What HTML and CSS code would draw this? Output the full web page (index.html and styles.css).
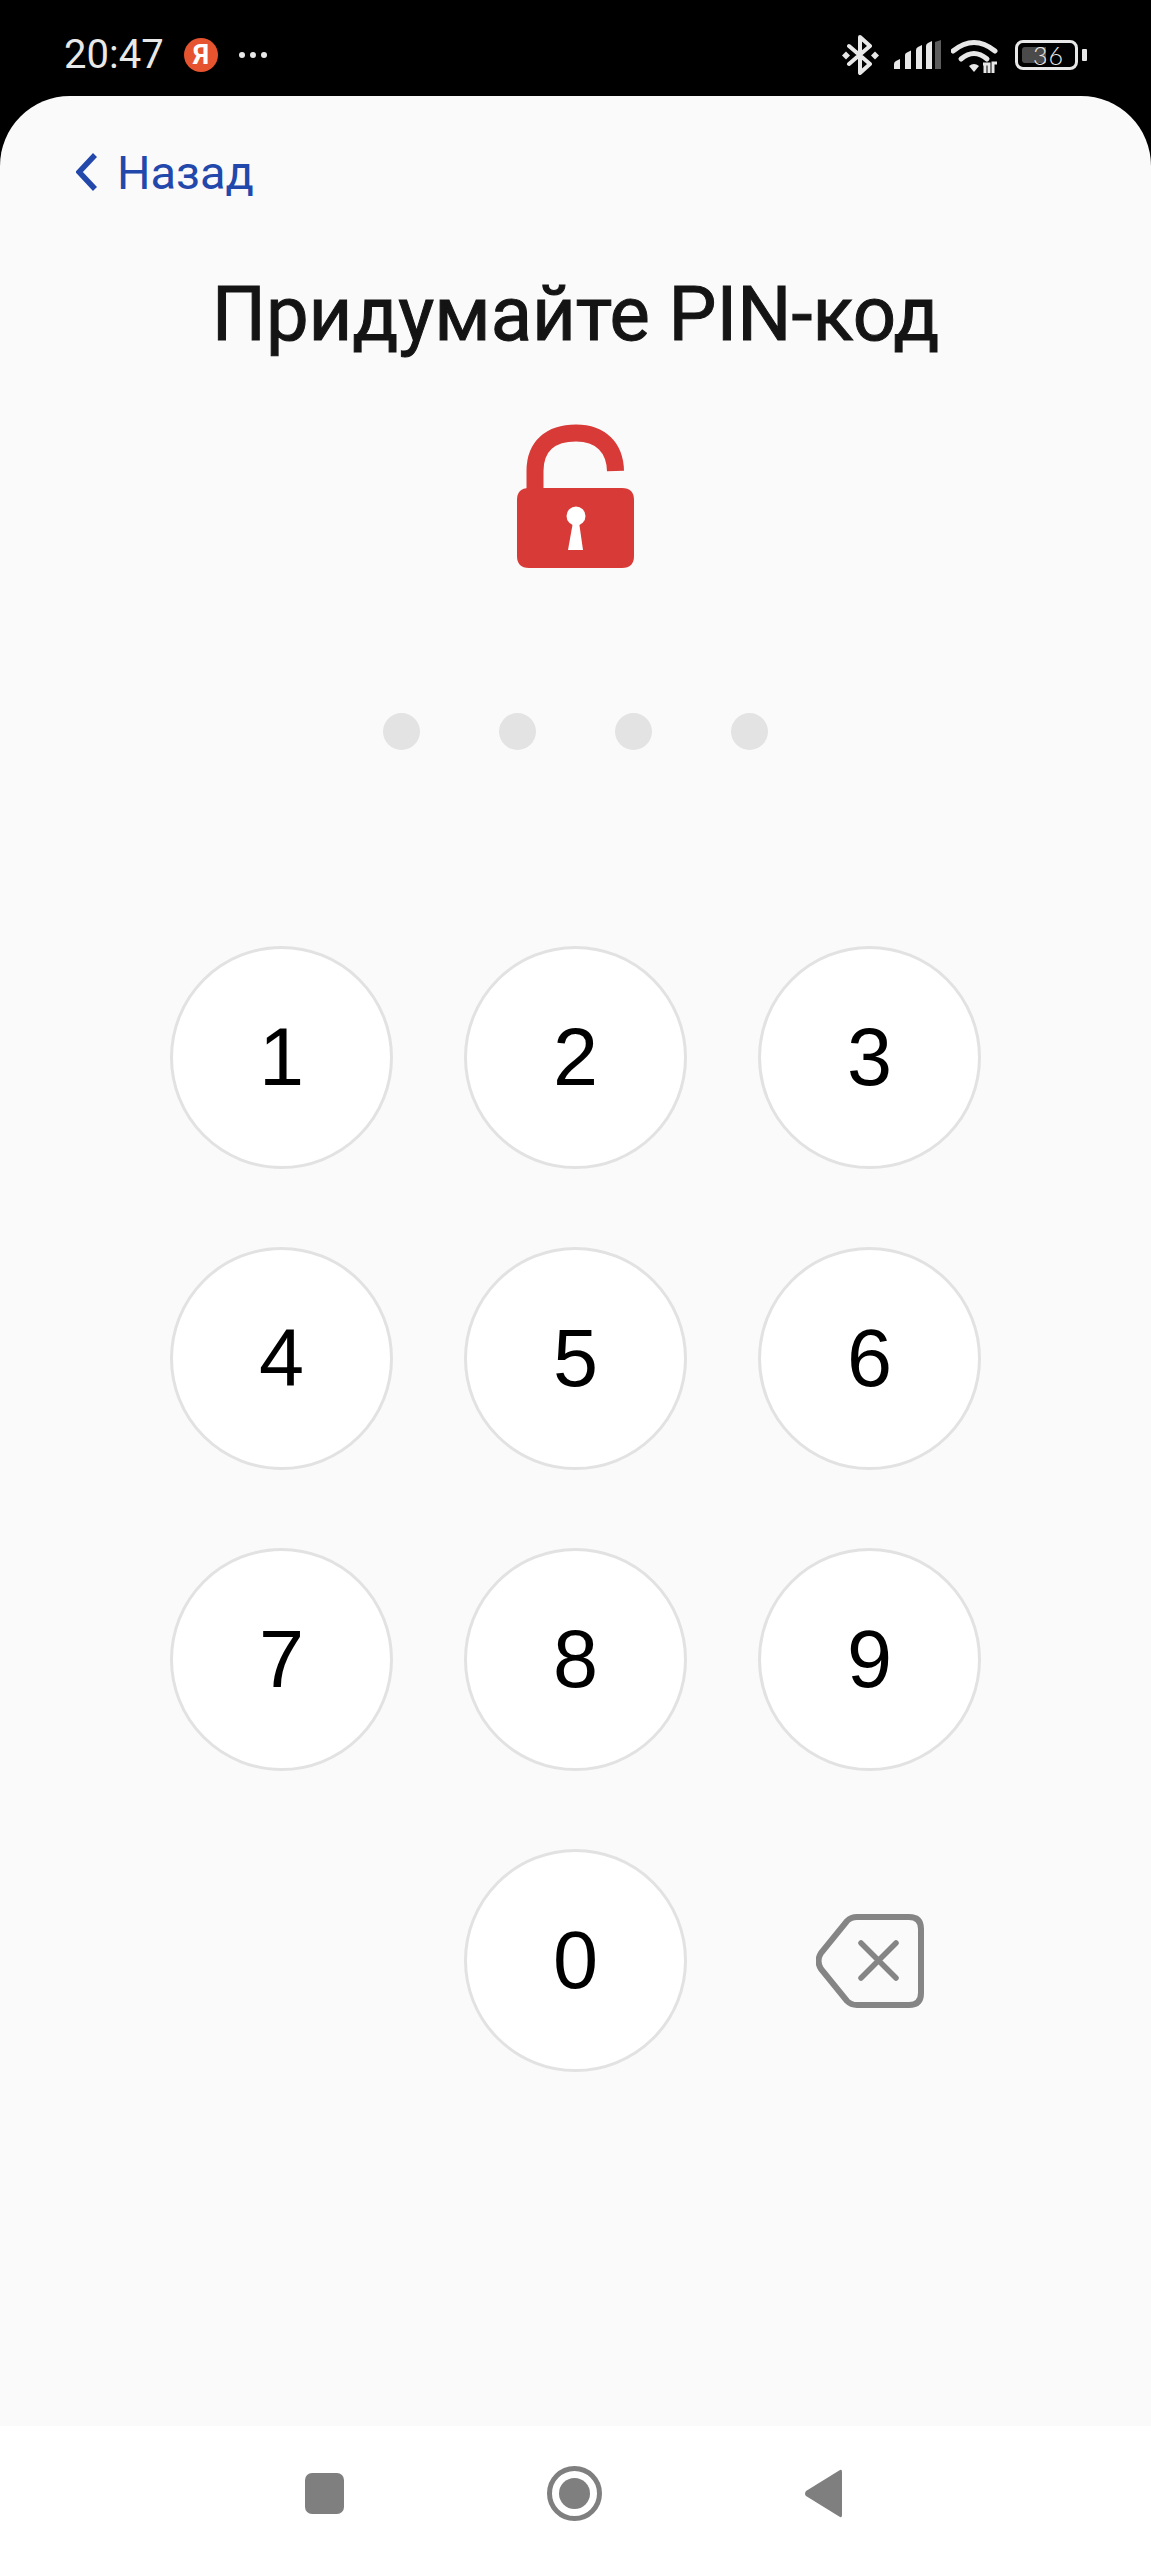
FILE: index.html
```html
<!DOCTYPE html>
<html lang="ru">
<head>
    <meta charset="UTF-8">
    <meta name="viewport" content="width=device-width, initial-scale=1.0">
    <title>Придумайте PIN-код</title>
    <link rel="stylesheet" href="styles.css">
</head>
<body>
    <div class="status-bar">
        <div class="status-left">
            <span class="time">20:47</span>
            <span class="ya-badge">Я</span>
            <span class="more-dots"><i></i><i></i><i></i></span>
        </div>
        <div class="status-right">
            <svg class="ic-bt" width="37" height="40" viewBox="0 0 37 40">
                <path d="M7 11L28 29L18 38V2L28 11L7 29" fill="none" stroke="#e8e8e8" stroke-width="4" stroke-linejoin="round" stroke-linecap="round"/>
                <path d="M4 16.500L8 20.500L4 24.500L0 20.500Z M33 16.500L37 20.500L33 24.500L29 20.500Z" fill="#e8e8e8"/>
            </svg>
            <svg class="ic-signal" width="47" height="30" viewBox="0 0 47 30">
                <path d="M0 29V24Q0 22 2 21L6 19V29Z" fill="#e8e8e8"/>
                <path d="M11 29V15Q11 13 13 12.500L17 10.500V29Z" fill="#e8e8e8"/>
                <path d="M22 29V10Q22 8 24 7L28 5V29Z" fill="#e8e8e8"/>
                <path d="M32 29V6Q32 4 34 3L38 1V29Z" fill="#e8e8e8"/>
                <path d="M41 29V2L47 0V29Z" fill="#5c5c5c"/>
            </svg>
            <svg class="ic-wifi" width="48" height="36" viewBox="0 0 48 36">
                <path d="M2 13Q23 -4 44 13" fill="none" stroke="#e8e8e8" stroke-width="5" stroke-linecap="round"/>
                <path d="M10 21Q23 10 36 21" fill="none" stroke="#e8e8e8" stroke-width="5" stroke-linecap="round"/>
                <path d="M18 28Q23 24 28 28L23 34Z" fill="#e8e8e8"/>
                <path d="M34 35V26M32 26H38V35M42 35V25H46" fill="none" stroke="#e8e8e8" stroke-width="3"/>
            </svg>
            <div class="battery">
                <div class="battery-body">
                    <div class="battery-fill"></div>
                    <span class="battery-num">36</span>
                </div>
                <div class="battery-tip"></div>
            </div>
        </div>
    </div>

    <div class="card">
        <a class="back-link">
            <svg width="21" height="38" viewBox="0 0 21 38">
                <path d="M19 2L3 19L19 36" fill="none" stroke="#2348ac" stroke-width="5.500"/>
            </svg>
            <span>Назад</span>
        </a>

        <h1>Придумайте PIN-код</h1>

        <svg class="lock" width="118" height="144" viewBox="0 0 118 144">
            <path d="M18 70V47C18 22 34 9 59 9C84 9 98 24 98.500 47" fill="none" stroke="#d83a37" stroke-width="17"/>
            <path d="M12 64H105Q117 64 117 76V132Q117 144 105 144H12Q0 144 0 132V76Q0 64 12 64Z" fill="#d83a37"/>
            <circle cx="59" cy="92" r="9.500" fill="#fff"/>
            <path d="M56 98H62L66 126H51Z" fill="#fff"/>
        </svg>

        <div class="pin-dots">
            <span></span><span></span><span></span><span></span>
        </div>

        <div class="keypad">
            <button class="key">1</button>
            <button class="key">2</button>
            <button class="key">3</button>
            <button class="key">4</button>
            <button class="key">5</button>
            <button class="key">6</button>
            <button class="key">7</button>
            <button class="key">8</button>
            <button class="key">9</button>
            <div></div>
            <button class="key">0</button>
            <button class="key-erase">
                <svg width="108" height="94" viewBox="0 0 108 94">
                    <path d="M41 3H93Q105 3 105 15V79Q105 91 93 91H41Q35 91 31 87L5 55Q0 47 5 39L31 7Q35 3 41 3Z" fill="none" stroke="#858585" stroke-width="6"/>
                    <path d="M45 29L80 64M80 29L45 64" fill="none" stroke="#858585" stroke-width="5.500" stroke-linecap="round"/>
                </svg>
            </button>
        </div>
    </div>

    <div class="nav-bar">
        <div class="nav-square"></div>
        <div class="nav-home"><div></div></div>
        <svg width="38" height="49" viewBox="0 0 38 49">
            <path d="M36 1Q38 0 38 3V46Q38 49 36 48L2 27Q0 25 2 22Z" fill="#7f7f7f"/>
        </svg>
    </div>
</body>
</html>
```

FILE: styles.css
```css
* {
    box-sizing: border-box;
}
body {
    margin: 0;
    height: 2560px;
    display: flex;
    flex-direction: column;
    background-color: #000;
    font-family: Roboto, "Noto Sans", sans-serif;
}

/* status bar */
.status-bar {
    height: 96px;
    flex: none;
    display: flex;
    justify-content: space-between;
    padding: 35px 64px 0 64px;
    color: #e8e8e8;
}
.status-left {
    display: flex;
    align-items: center;
    height: 40px;
}
.time {
    font-size: 40px;
    line-height: 40px;
    width: 120px;
}
.ya-badge {
    width: 34px;
    height: 34px;
    border-radius: 50%;
    background-color: #e5532f;
    color: #fff;
    font-size: 27px;
    font-weight: 700;
    line-height: 34px;
    text-align: center;
}
.more-dots {
    display: flex;
    gap: 5px;
    margin-left: 21px;
}
.more-dots i {
    width: 6px;
    height: 6px;
    border-radius: 50%;
    background-color: #e8e8e8;
}
.status-right {
    display: flex;
    align-items: flex-start;
}
.ic-signal {
    margin: 5px 0 0 15px;
}
.ic-wifi {
    margin: 3px 0 0 10px;
}
.battery {
    display: flex;
    align-items: center;
    margin: 5px 0 0 16px;
}
.battery-body {
    position: relative;
    width: 63px;
    height: 30px;
    border: 3px solid #e8e8e8;
    border-radius: 8px;
    padding: 4px;
}
.battery-fill {
    width: 24px;
    height: 16px;
    background-color: #4a4a4a;
    border-radius: 3px 0 0 3px;
}
.battery-num {
    position: absolute;
    top: -1px;
    left: 15px;
    font-family: Lato, sans-serif;
    font-size: 25px;
    line-height: 26px;
    font-weight: 300;
    letter-spacing: 1px;
}
.battery-tip {
    width: 5px;
    height: 12px;
    margin-left: 4px;
    background-color: #e8e8e8;
    border-radius: 1px;
}

/* main card */
.card {
    flex: 1;
    display: flex;
    flex-direction: column;
    align-items: center;
    background-color: #fafafa;
    border-radius: 70px 70px 0 0;
}
.back-link {
    align-self: flex-start;
    display: flex;
    align-items: center;
    gap: 20px;
    height: 40px;
    margin: 56px 0 0 76px;
    color: #2348ac;
    font-size: 47px;
}
h1 {
    margin: 79px 0 0 0;
    height: 86px;
    font-size: 76px;
    line-height: 86px;
    font-weight: 400;
    -webkit-text-stroke: 1px #141414;
    color: #141414;
}
.lock {
    margin-top: 67px;
    display: block;
}
.pin-dots {
    display: flex;
    gap: 79px;
    margin-top: 145px;
}
.pin-dots span {
    width: 37px;
    height: 37px;
    border-radius: 50%;
    background-color: #e3e3e3;
}
.keypad {
    display: grid;
    grid-template-columns: repeat(3, 223px);
    grid-auto-rows: 223px;
    column-gap: 71px;
    row-gap: 78px;
    margin-top: 196px;
}
.key {
    border: 3px solid #e2e2e2;
    border-radius: 50%;
    background-color: #fff;
    color: #000;
    padding: 0;
    font-family: "Liberation Sans", Arial, sans-serif;
    font-size: 81px;
}
.key-erase {
    border: none;
    background: none;
    padding: 0;
    display: flex;
    align-items: center;
    justify-content: center;
}

/* navigation bar */
.nav-bar {
    height: 134px;
    flex: none;
    display: flex;
    align-items: center;
    justify-content: space-between;
    padding: 0 309px 0 305px;
    background-color: #fff;
}
.nav-square {
    width: 39px;
    height: 41px;
    border-radius: 7px;
    background-color: #7f7f7f;
}
.nav-home {
    width: 55px;
    height: 55px;
    border: 5px solid #7f7f7f;
    border-radius: 50%;
    display: flex;
    align-items: center;
    justify-content: center;
}
.nav-home div {
    width: 31px;
    height: 31px;
    border-radius: 50%;
    background-color: #7f7f7f;
}
```
